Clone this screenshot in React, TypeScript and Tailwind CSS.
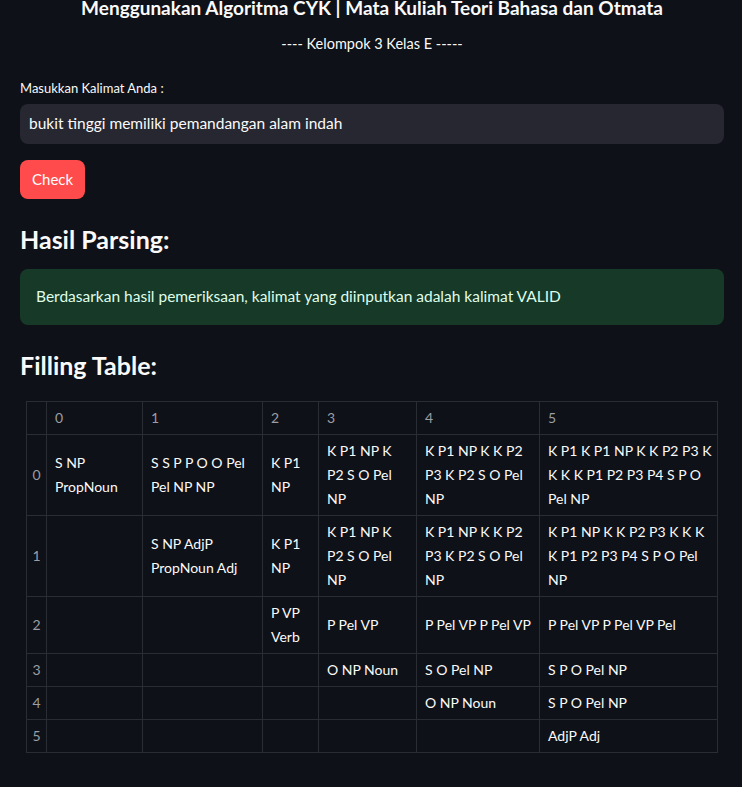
import React from 'react'

type Cell = string[]

const rows: Cell[][] = [
  [
    ['S NP', 'PropNoun'],
    ['S S P P O O Pel', 'Pel NP NP'],
    ['K P1', 'NP'],
    ['K P1 NP K', 'P2 S O Pel', 'NP'],
    ['K P1 NP K K P2', 'P3 K P2 S O Pel', 'NP'],
    ['K P1 K P1 NP K K P2 P3 K', 'K K K P1 P2 P3 P4 S P O', 'Pel NP'],
  ],
  [
    [],
    ['S NP AdjP', 'PropNoun Adj'],
    ['K P1', 'NP'],
    ['K P1 NP K', 'P2 S O Pel', 'NP'],
    ['K P1 NP K K P2', 'P3 K P2 S O Pel', 'NP'],
    ['K P1 NP K K P2 P3 K K K', 'K P1 P2 P3 P4 S P O Pel', 'NP'],
  ],
  [[], [], ['P VP', 'Verb'], ['P Pel VP'], ['P Pel VP P Pel VP'], ['P Pel VP P Pel VP Pel']],
  [[], [], [], ['O NP Noun'], ['S O Pel NP'], ['S P O Pel NP']],
  [[], [], [], [], ['O NP Noun'], ['S P O Pel NP']],
  [[], [], [], [], [], ['AdjP Adj']],
]

const colWidths = ['w-[20px]', 'w-[96px]', 'w-[120px]', 'w-[56px]', 'w-[98px]', 'w-[123px]', 'w-[178px]']

function FillingTable() {
  return (
    <table className="ml-[6px] border-collapse table-fixed w-[691px] text-[14px] leading-[24px]">
      <colgroup>
        {colWidths.map((w, i) => (
          <col key={i} className={w} />
        ))}
      </colgroup>
      <thead>
        <tr>
          <th className="border border-[#2a2d34] h-[33px]" />
          {[0, 1, 2, 3, 4, 5].map((n) => (
            <th
              key={n}
              className="border border-[#2a2d34] px-2 py-1 text-left font-normal text-[#9b9ea3] align-middle"
            >
              {n}
            </th>
          ))}
        </tr>
      </thead>
      <tbody>
        {rows.map((row, r) => (
          <tr key={r}>
            <th className="border border-[#2a2d34] text-center font-normal text-[#9b9ea3] align-middle">
              {r}
            </th>
            {row.map((lines, c) => (
              <td
                key={c}
                className="border border-[#2a2d34] px-2 py-1 align-middle text-[#fafafa] whitespace-nowrap"
              >
                {lines.map((l, i) => (
                  <div key={i}>{l}</div>
                ))}
                {lines.length === 0 && <div>&nbsp;</div>}
              </td>
            ))}
          </tr>
        ))}
      </tbody>
    </table>
  )
}

export default function App() {
  return (
    <div
      className="min-h-screen bg-[#0e1117] text-[#fafafa] pl-5 pr-[18px] pb-10"
      style={{ fontFamily: 'Lato, "Noto Sans", sans-serif' }}
    >
      <h1 className="text-center font-bold text-[19px] leading-[22px] -mt-[3px]">
        Menggunakan Algoritma CYK | Mata Kuliah Teori Bahasa dan Otmata
      </h1>
      <p className="text-center text-[14.5px] leading-[22px] mt-[14px]">---- Kelompok 3 Kelas E -----</p>

      <label className="block text-[13px] leading-[18px] mt-[24px]">Masukkan Kalimat Anda :</label>
      <div className="mt-[7px] h-[40px] rounded-lg bg-[#262730] flex items-center px-[9px] text-[15.5px]">
        bukit tinggi memiliki pemandangan alam indah
      </div>

      <button className="mt-4 h-[39px] px-3 rounded-lg bg-[#ff4b4b] text-white text-[15px]">Check</button>

      <h3 className="mt-[24px] text-[25px] leading-[32px] font-bold">Hasil Parsing:</h3>

      <div className="mt-[14px] h-[56px] rounded-lg bg-[#173928] text-[#dffde9] text-[15.5px] flex items-center px-4">
        Berdasarkan hasil pemeriksaan, kalimat yang diinputkan adalah kalimat VALID
      </div>

      <h3 className="mt-[24px] text-[25px] leading-[32px] font-bold">Filling Table:</h3>

      <div className="mt-[20px]">
        <FillingTable />
      </div>
    </div>
  )
}
